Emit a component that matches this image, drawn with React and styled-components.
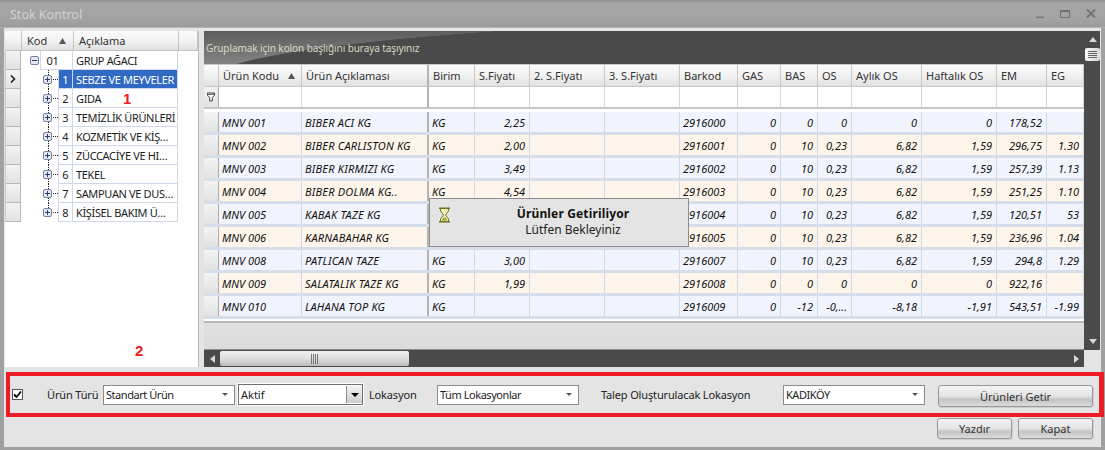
import React from "react";
import styled, { createGlobalStyle } from "styled-components";

const GlobalStyle = createGlobalStyle`
  html, body { margin: 0; padding: 0; }
  body {
    width: 1105px;
    height: 450px;
    overflow: hidden;
    background: #e4e4e4;
    font-family: "Noto Sans", "Liberation Sans", sans-serif;
    font-size: 11px;
    color: #1c1c1c;
  }
`;

const COLUMNS = "15px 83px 127px 46px 55px 75px 75px 58px 43px 37px 34px 70px 75px 50px 37px";

const Window = styled.div`
  position: relative;
  width: 1105px;
  height: 450px;
  display: flex;
  flex-direction: column;
  background: #e4e4e4;
  box-sizing: border-box;
  overflow: hidden;
`;

const TitleBar = styled.div`
  height: 28px;
  flex: none;
  box-sizing: border-box;
  display: flex;
  align-items: center;
  justify-content: space-between;
  padding: 2px 9px 0 10px;
  background: linear-gradient(#8f8f8f 0, #a6a6a6 3px, #a2a2a2 20px, #9b9b9b 100%);
  border-bottom: 1px solid #b4b4b4;
  color: #d2d2d2;
  font-size: 12.5px;
`;

const WindowButtons = styled.div`
  display: flex;
  align-items: center;
  gap: 16px;
  margin-bottom: 2px;
`;

const Body = styled.div`
  flex: 1;
  display: flex;
  flex-direction: column;
  padding: 3px 5px 0 5px;
  box-shadow: inset 4px 0 0 #a0a0a0, inset -4px 0 0 #a0a0a0, inset 0 -3px 0 #a0a0a0;
`;

const MainRow = styled.div`
  height: 336px;
  flex: none;
  display: flex;
  gap: 5px;
`;

const TreePanel = styled.div`
  width: 193px;
  flex: none;
  background: #fff;
  border-right: 1px solid #bdbdbd;
`;

const headerFill = "linear-gradient(#fbfbfb, #f1f1f1 50%, #dfdfdf)";
const indicatorFill = "linear-gradient(#f3f3f3, #e2e2e2)";

const TreeHead = styled.div`
  height: 20px;
  display: grid;
  grid-template-columns: 17px 52px 105px 19px;
  background: ${headerFill};
`;

const TreeHeadCell = styled.div`
  display: flex;
  align-items: center;
  justify-content: space-between;
  padding: 0 6px 0 5px;
  border-right: 1px solid #c4c4c4;
  border-bottom: 1px solid #c4c4c4;
  color: #333;
`;

const TreeBody = styled.div`
  position: relative;
`;

const TreeRowWrap = styled.div`
  height: 19px;
  display: flex;
`;

const RowIndicator = styled.div`
  width: 16px;
  flex: none;
  display: flex;
  align-items: center;
  justify-content: center;
  background: ${indicatorFill};
  border: 1px solid #b8b8b8;
  border-top: 0;
  border-left-color: #c8c8c8;
  box-sizing: border-box;
`;

const Gutter = styled.div`
  width: ${p => (p.$root ? 19 : 37)}px;
  flex: none;
  position: relative;
  display: flex;
  align-items: center;
  box-sizing: border-box;
  padding-left: ${p => (p.$root ? 9 : 22)}px;
`;

const DottedDown = styled.span`
  position: absolute;
  left: 27px;
  top: 0;
  height: ${p => (p.$last ? "9px" : "19px")};
  border-left: 1px dotted #222;
`;

const DottedAcross = styled.span`
  position: absolute;
  left: 32px;
  top: 9px;
  width: 5px;
  border-top: 1px dotted #222;
`;

const TreeCell = styled.div`
  box-sizing: border-box;
  width: ${p => p.$w}px;
  flex: none;
  display: flex;
  align-items: center;
  justify-content: ${p => (p.$center ? "center" : "flex-start")};
  padding-left: ${p => (p.$center ? 0 : 3)}px;
  white-space: nowrap;
  overflow: hidden;
  letter-spacing: ${p => (p.$center ? 0 : "-0.35px")};
  background: ${p => (p.$selected ? "#316ac5" : "#fff")};
  color: ${p => (p.$selected ? "#fff" : "#1c1c1c")};
  border-right: 1px solid #cfd8e8;
  border-bottom: 1px solid #cfd8e8;
  border-left: ${p => (p.$left ? "1px solid #cfd8e8" : "0")};
`;

const GridPanel = styled.div`
  flex: 1;
  min-width: 0;
  display: flex;
  background: #4a4a4a;
`;

const GridMain = styled.div`
  width: 880px;
  flex: none;
  display: flex;
  flex-direction: column;
`;

const GroupPanel = styled.div`
  height: 33px;
  flex: none;
  display: flex;
  align-items: center;
  padding: 1px 0 0 2px;
  box-sizing: border-box;
  color: #d8d8c4;
  font-size: 10px;
  letter-spacing: -0.08px;
  background:
    radial-gradient(ellipse 800px 66px at 800px 51px, #4a4a4a 99.5%, transparent 100%),
    linear-gradient(#5e5e5e, #828282);
`;

const Table = styled.div`
  flex: 1;
  overflow: hidden;
  background: linear-gradient(#fafafa, #f2f2f2 50%, #dcdcdc);
  border-bottom: 1px solid #8c8c8c;
  display: flex;
  flex-direction: column;
`;

const HeadRow = styled.div`
  display: grid;
  grid-template-columns: ${COLUMNS};
  height: 22px;
  flex: none;
  background: ${headerFill};
  border-top: 1px solid #c8c8c8;
`;

const HeadCell = styled.div`
  display: flex;
  align-items: center;
  justify-content: space-between;
  padding: 0 5px 0 4px;
  white-space: nowrap;
  color: #333;
  box-sizing: border-box;
  border-right: ${p => (p.$thick ? "2px solid #b4b4b4" : "1px solid #c8c8c8")};
  border-bottom: 1px solid #c8c8c8;
`;

const FilterRow = styled.div`
  display: grid;
  grid-template-columns: ${COLUMNS};
  height: 20px;
  flex: none;
  background: #fff;
  border-bottom: 2px solid #c6c6c6;
`;

const FilterCell = styled.div`
  box-sizing: border-box;
  border-right: ${p => (p.$thick ? "2px solid #b4b4b4" : "1px solid #cfd8e8")};
`;

const FilterIndicator = styled.div`
  display: flex;
  align-items: center;
  justify-content: center;
  background: ${indicatorFill};
  border-right: 1px solid #ababab;
`;

const RowsArea = styled.div`
  height: 214px;
  flex: none;
  padding-top: 3px;
  background: #fff;
  border-bottom: 2px solid #b8b8b8;
  overflow: hidden;
  box-sizing: border-box;
`;

const DataRow = styled.div`
  display: grid;
  grid-template-columns: ${COLUMNS};
  height: 23px;
  box-sizing: border-box;
  background: ${p => (p.$alt ? "#fdf5ea" : "#f1f4fd")};
  border-bottom: 3px solid #d6deeb;
`;

const Cell = styled.div`
  box-sizing: border-box;
  display: flex;
  align-items: center;
  justify-content: ${p => (p.$right ? "flex-end" : "flex-start")};
  padding: 0 4px 0 3px;
  font-style: italic;
  white-space: nowrap;
  overflow: hidden;
  color: #111;
  letter-spacing: ${p => (p.$name ? "0.2px" : 0)};
  border-right: ${p => (p.$thick ? "2px solid #b4b4b4" : "1px solid #cfd8e8")};
`;

const IndicatorCell = styled.div`
  background: ${indicatorFill};
  border-right: 1px solid #ababab;
`;

const HScroll = styled.div`
  height: 17px;
  flex: none;
  display: flex;
  align-items: center;
  background: #4a4a4a;
`;

const ScrollEnd = styled.div`
  width: ${p => p.$w}px;
  flex: none;
  display: flex;
  align-items: center;
  justify-content: center;
`;

const HThumb = styled.div`
  width: 189px;
  height: 15px;
  flex: none;
  display: flex;
  align-items: center;
  justify-content: center;
  border-radius: 2px;
  background: linear-gradient(#f2f2f2, #dedede 50%, #bcbcbc);
`;

const ScrollFill = styled.div`
  flex: 1;
`;

const VScrollColumn = styled.div`
  width: 17px;
  flex: none;
  display: flex;
  flex-direction: column;
`;

const VScroll = styled.div`
  flex: 1;
  display: flex;
  flex-direction: column;
  align-items: center;
  padding: 6px 0 6px;
  box-sizing: border-box;
`;

const VThumb = styled.div`
  width: 15px;
  height: 13px;
  margin-top: 6px;
  display: flex;
  align-items: center;
  justify-content: center;
  border-radius: 2px;
  background: linear-gradient(90deg, #fafafa, #d6d6d6);
`;

const VFill = styled.div`
  flex: 1;
`;

const ScrollCorner = styled.div`
  height: 17px;
  flex: none;
  background: #e4e4e4;
`;

const FilterForm = styled.form`
  height: 45px;
  width: 1098px;
  margin: 5px 0 0 1px;
  flex: none;
  box-sizing: border-box;
  border: 4px solid #ed1c24;
  border-right-width: 5px;
  display: flex;
  align-items: center;
  padding: 0 0 0 2px;
`;

const CheckBox = styled.span`
  width: 11px;
  height: 11px;
  flex: none;
  background: #fff;
  border: 1px solid #555;
  box-sizing: border-box;
  display: flex;
  align-items: center;
  justify-content: center;
`;

const FieldLabel = styled.label`
  flex: none;
  margin-left: ${p => p.$ml}px;
  width: ${p => p.$w}px;
  color: #222;
  white-space: nowrap;
  letter-spacing: -0.15px;
`;

const Select = styled.div`
  box-sizing: border-box;
  flex: none;
  width: ${p => p.$w}px;
  height: 20px;
  display: flex;
  align-items: center;
  justify-content: space-between;
  padding: 0 6px 0 2px;
  background: #fff;
  border: 1px solid #8c8c8c;
  white-space: nowrap;
  letter-spacing: -0.45px;
`;

const SelectArrow = styled.span`
  width: 0;
  height: 0;
  border-left: 3px solid transparent;
  border-right: 3px solid transparent;
  border-top: 3px solid #555;
`;

const FlatSelect = styled.div`
  box-sizing: border-box;
  flex: none;
  width: 125px;
  margin-left: 3px;
  height: 21px;
  display: flex;
  align-items: center;
  justify-content: space-between;
  padding-left: 2px;
  background: #fff;
  border: 1px solid #707070;
  box-shadow: 0 0 0 1px #fff;
`;

const FlatButton = styled.span`
  width: 15px;
  height: 17px;
  display: flex;
  align-items: center;
  justify-content: center;
  background: linear-gradient(#f2f2f2, #cfcfcf);
  border-left: 1px solid #8c8c8c;
`;

const Black = styled.span`
  width: 0;
  height: 0;
  border-left: 4px solid transparent;
  border-right: 4px solid transparent;
  border-top: 4px solid #000;
`;

const Button = styled.button`
  box-sizing: border-box;
  flex: none;
  width: ${p => p.$w}px;
  height: ${p => p.$h}px;
  margin-left: ${p => p.$ml || 0}px;
  margin-top: ${p => p.$mt || 0}px;
  padding: 0;
  font: inherit;
  color: #333;
  border: 1px solid #989898;
  border-radius: 3px;
  background: linear-gradient(#f4f4f4, #e4e4e4 50%, #c4c4c4 68%, #dcdcdc);
  box-shadow: 1px 1px 0 #cfcfcf;
`;

const Footer = styled.div`
  display: flex;
  justify-content: flex-end;
  gap: 6px;
  padding: 1px 7px 0 0;
`;

const Popup = styled.div`
  position: absolute;
  left: 429px;
  top: 198px;
  width: 260px;
  height: 49px;
  box-sizing: border-box;
  background: #e4e4e4;
  border: 1px solid #8c8c8c;
  display: flex;
  padding: 7px 0 0 9px;
`;

const HourglassSlot = styled.div`
  margin-top: 1px;
`;

const PopupText = styled.div`
  flex: 1;
  text-align: center;
  line-height: 16px;
  padding-left: 8px;
  font-size: 12px;
  color: #222;
`;

const PopupTitle = styled.div`
  font-weight: 700;
  color: #111;
  letter-spacing: 0.15px;
`;

const Mark = styled.span`
  position: absolute;
  left: ${p => p.$x}px;
  top: ${p => p.$y}px;
  color: #ed1c24;
  font-family: "Liberation Sans", sans-serif;
  font-weight: 700;
  font-size: 15px;
`;

function SortUp() {
  return (
    <svg width="9" height="8" viewBox="0 0 9 8">
      <path d="M4.5 1 L8 7 L1 7 Z" fill="#555" />
    </svg>
  );
}

function ExpandBox({ open }) {
  return (
    <svg width="9" height="9" viewBox="0 0 9 9" style={{ position: "relative", zIndex: 1 }}>
      <rect x="0.5" y="0.5" width="8" height="8" rx="1.5" fill="#e4e8f2" stroke="#76829c" />
      <path d={open ? "M2 4.5H7" : "M2 4.5H7M4.5 2V7"} stroke="#2f3c5c" />
    </svg>
  );
}

function Funnel() {
  return (
    <svg width="8" height="10" viewBox="0 0 9 11">
      <path d="M0.5 1 H8.5 V3.5 L6 6 V10 H3 V6 L0.5 3.5 Z" fill="#fff" stroke="#333" />
      <path d="M1 2.5H8" stroke="#333" />
    </svg>
  );
}

function Hourglass() {
  return (
    <svg width="11" height="16" viewBox="0 0 11 16">
      <path d="M1.5 1.5 H9.5 V4 L6.5 8 L9.5 12 V14.5 H1.5 V12 L4.5 8 L1.5 4 Z" fill="#eeeeb0" stroke="#77772a" />
      <path d="M3 12.5 L5.5 10 L8 12.5 V13.5 H3 Z" fill="#a39a2c" />
      <path d="M0 0.5 H11 V2 H0 Z M0 14 H11 V15.5 H0 Z" fill="#6f6f22" />
    </svg>
  );
}

function GripLines({ vertical }) {
  return vertical ? (
    <svg width="8" height="10" viewBox="0 0 8 10">
      <path d="M0.5 0V10M2.5 0V10M4.5 0V10M6.5 0V10" stroke="#777" />
    </svg>
  ) : (
    <svg width="9" height="8" viewBox="0 0 9 8">
      <path d="M0 0.5H9M0 2.5H9M0 4.5H9M0 6.5H9" stroke="#666" />
    </svg>
  );
}

function Triangle({ dir, color = "#d8d8d8", w = 8, h = 5 }) {
  const paths = {
    up: `M${w / 2} 0 L${w} ${h} L0 ${h} Z`,
    down: `M0 0 L${w} 0 L${w / 2} ${h} Z`,
    left: `M${w} 0 L${w} ${h} L0 ${h / 2} Z`,
    right: `M0 0 L${w} ${h / 2} L0 ${h} Z`,
  };
  return (
    <svg width={w} height={h} viewBox={`0 0 ${w} ${h}`}>
      <path d={paths[dir]} fill={color} />
    </svg>
  );
}

const treeItems = [
  "SEBZE VE MEYVELER",
  "GIDA",
  "TEMİZLİK ÜRÜNLERİ",
  "KOZMETİK VE KİŞ…",
  "ZÜCCACİYE VE HI…",
  "TEKEL",
  "SAMPUAN VE DUS…",
  "KİŞİSEL BAKIM Ü…",
];

const heads = ["Ürün Kodu", "Ürün Açıklaması", "Birim", "S.Fiyatı", "2. S.Fiyatı", "3. S.Fiyatı", "Barkod", "GAS", "BAS", "OS", "Aylık OS", "Haftalık OS", "EM", "EG"];

const rows = [
  ["MNV 001", "BIBER ACI KG", "KG", "2,25", "", "", "2916000", "0", "0", "0", "0", "0", "178,52", ""],
  ["MNV 002", "BIBER CARLISTON KG", "KG", "2,00", "", "", "2916001", "0", "10", "0,23", "6,82", "1,59", "296,75", "1.30"],
  ["MNV 003", "BIBER KIRMIZI KG", "KG", "3,49", "", "", "2916002", "0", "10", "0,23", "6,82", "1,59", "257,39", "1.13"],
  ["MNV 004", "BIBER DOLMA KG..", "KG", "4,54", "", "", "2916003", "0", "10", "0,23", "6,82", "1,59", "251,25", "1.10"],
  ["MNV 005", "KABAK TAZE KG", "KG", "", "", "", "2916004", "0", "10", "0,23", "6,82", "1,59", "120,51", "53"],
  ["MNV 006", "KARNABAHAR KG", "KG", "", "", "", "2916005", "0", "10", "0,23", "6,82", "1,59", "236,96", "1.04"],
  ["MNV 008", "PATLICAN TAZE", "KG", "3,00", "", "", "2916007", "0", "10", "0,23", "6,82", "1,59", "294,8", "1.29"],
  ["MNV 009", "SALATALIK TAZE KG", "KG", "1,99", "", "", "2916008", "0", "0", "0", "0", "0", "922,16", ""],
  ["MNV 010", "LAHANA TOP KG", "KG", "", "", "", "2916009", "0", "-12", "-0,...", "-8,18", "-1,91", "543,51", "-1.99"],
];

const rightAligned = new Set([3, 4, 5, 7, 8, 9, 10, 11, 12, 13]);

export default function App() {
  return (
    <Window>
      <GlobalStyle />
      <TitleBar>
        <span>Stok Kontrol</span>
        <WindowButtons>
          <svg width="8" height="8" viewBox="0 0 8 8"><path d="M0 6.5H8V8H0Z" fill="#7c7c7c" /></svg>
          <svg width="10" height="8" viewBox="0 0 10 8"><path d="M0.5 0.5H9.5V7.5H0.5Z" fill="none" stroke="#707070" /><path d="M0 0H10V2H0Z" fill="#707070" /></svg>
          <svg width="10" height="9" viewBox="0 0 10 9"><path d="M1 0.5L9 8.5M9 0.5L1 8.5" stroke="#757575" strokeWidth="2" /></svg>
        </WindowButtons>
      </TitleBar>
      <Body>
        <MainRow>
          <TreePanel>
            <TreeHead>
              <TreeHeadCell />
              <TreeHeadCell>Kod <SortUp /></TreeHeadCell>
              <TreeHeadCell>Açıklama</TreeHeadCell>
              <TreeHeadCell />
            </TreeHead>
            <TreeBody>
              <TreeRowWrap>
                <RowIndicator />
                <Gutter $root><ExpandBox open /></Gutter>
                <TreeCell $w={33} $left>&nbsp;01</TreeCell>
                <TreeCell $w={105}>GRUP AĞACI</TreeCell>
              </TreeRowWrap>
              {treeItems.map((name, i) => (
                <TreeRowWrap key={name}>
                  <RowIndicator>
                    {i === 0 && (
                      <svg width="6" height="8" viewBox="0 0 6 8">
                        <path d="M1 0.5L4.5 4L1 7.5" fill="none" stroke="#222" strokeWidth="1.6" />
                      </svg>
                    )}
                  </RowIndicator>
                  <Gutter>
                    <DottedDown $last={i === treeItems.length - 1} />
                    <DottedAcross />
                    <ExpandBox />
                  </Gutter>
                  <TreeCell $w={15} $center $left $selected={i === 0}>{i + 1}</TreeCell>
                  <TreeCell $w={105} $selected={i === 0}>{name}</TreeCell>
                </TreeRowWrap>
              ))}
            </TreeBody>
          </TreePanel>
          <GridPanel>
            <GridMain>
              <GroupPanel>Gruplamak için kolon başlığını buraya taşıyınız</GroupPanel>
              <Table>
                <HeadRow>
                  <HeadCell />
                  {heads.map((h, i) => (
                    <HeadCell key={h} $thick={i === 1}>
                      {h}
                      {i === 0 && <SortUp />}
                    </HeadCell>
                  ))}
                </HeadRow>
                <FilterRow>
                  <FilterIndicator><Funnel /></FilterIndicator>
                  {heads.map((h, i) => <FilterCell key={h} $thick={i === 1} />)}
                </FilterRow>
                <RowsArea>
                  {rows.map((row, r) => (
                    <DataRow key={row[0]} $alt={r % 2 === 1}>
                      <IndicatorCell />
                      {row.map((value, c) => (
                        <Cell key={c} $right={rightAligned.has(c)} $thick={c === 1} $name={c === 1}>{value}</Cell>
                      ))}
                    </DataRow>
                  ))}
                </RowsArea>
              </Table>
              <HScroll>
                <ScrollEnd $w={16}><Triangle dir="left" w={5} h={8} /></ScrollEnd>
                <HThumb><GripLines vertical /></HThumb>
                <ScrollFill />
                <ScrollEnd $w={16}><Triangle dir="right" w={5} h={8} /></ScrollEnd>
              </HScroll>
            </GridMain>
            <VScrollColumn>
              <VScroll>
                <Triangle dir="up" />
                <VThumb><GripLines /></VThumb>
                <VFill />
                <Triangle dir="down" />
              </VScroll>
              <ScrollCorner />
            </VScrollColumn>
          </GridPanel>
        </MainRow>
        <FilterForm>
          <CheckBox>
            <svg width="9" height="9" viewBox="0 0 9 9"><path d="M1 4.5L3.5 7L8 1.5" fill="none" stroke="#000" strokeWidth="1.8" /></svg>
          </CheckBox>
          <FieldLabel $ml={24} $w={56}>Ürün Türü</FieldLabel>
          <Select $w={132}>Standart Ürün <SelectArrow /></Select>
          <FlatSelect>Aktif <FlatButton><Black /></FlatButton></FlatSelect>
          <FieldLabel $ml={6} $w={68}>Lokasyon</FieldLabel>
          <Select $w={142}>Tüm Lokasyonlar <SelectArrow /></Select>
          <FieldLabel $ml={22} $w={182}>Talep Oluşturulacak Lokasyon</FieldLabel>
          <Select $w={142}>KADIKÖY <SelectArrow /></Select>
          <Button type="button" $w={155} $h={22} $ml={13} $mt={3}>Ürünleri Getir</Button>
        </FilterForm>
        <Footer>
          <Button type="button" $w={75} $h={21}>Yazdır</Button>
          <Button type="button" $w={75} $h={21}>Kapat</Button>
        </Footer>
      </Body>
      <Popup>
        <HourglassSlot><Hourglass /></HourglassSlot>
        <PopupText>
          <PopupTitle>Ürünler Getiriliyor</PopupTitle>
          Lütfen Bekleyiniz
        </PopupText>
      </Popup>
      <Mark $x={123} $y={90}>1</Mark>
      <Mark $x={135} $y={342}>2</Mark>
    </Window>
  );
}
